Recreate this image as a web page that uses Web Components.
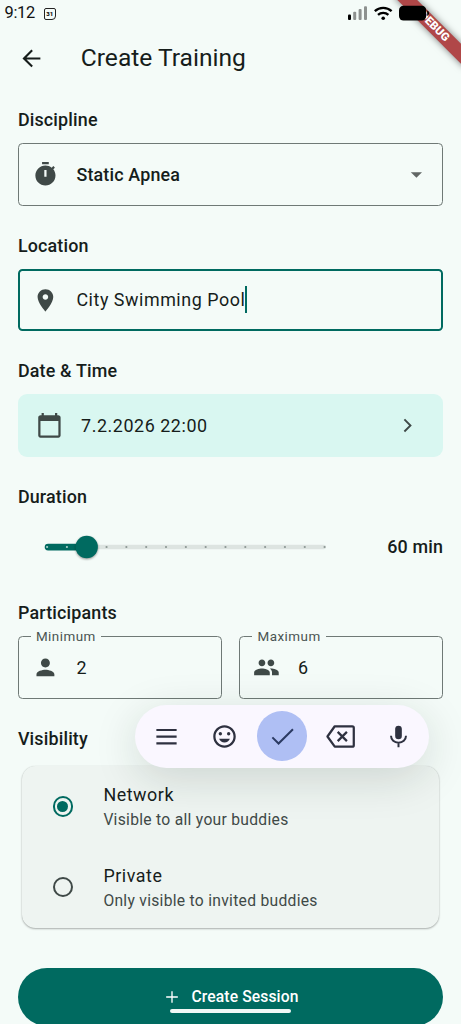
<!DOCTYPE html>
<html lang="en">
<head>
<meta charset="utf-8">
<title>Create Training</title>
<style>
html,body{margin:0;height:100%;overflow:hidden;background:#f4fbf8}
body{font-family:Roboto,"Noto Sans",sans-serif;color:#161d1b}
</style>
</head>
<body>
<training-screen></training-screen>
<script>
const ICONS = {
  back: '<path d="M20 11.100H7.600l5.700-5.700L12 4l-8 8 8 8 1.300-1.400-5.700-5.700H20z"/>',
  timer: '<path fill-rule="evenodd" d="M15 1H9v2h6V1zm-4 13h2V8h-2v6zm8.03-6.61l1.42-1.42c-.43-.51-.9-.99-1.41-1.41l-1.42 1.42C16.07 4.74 14.12 4 12 4c-4.97 0-9 4.03-9 9s4.02 9 9 9 9-4.03 9-9c0-2.12-.74-4.07-1.97-5.61z"/>',
  place: '<path d="M12 2C8.13 2 5 5.13 5 9c0 5.25 7 13 7 13s7-7.75 7-13c0-3.87-3.13-7-7-7zm0 9.5c-1.38 0-2.5-1.12-2.5-2.5s1.12-2.5 2.5-2.5 2.5 1.12 2.5 2.5-1.12 2.5-2.5 2.5z"/>',
  calendar: '<path d="M20 3h-1V1h-2v2H7V1H5v2H4c-1.1 0-2 .9-2 2v16c0 1.1.9 2 2 2h16c1.1 0 2-.9 2-2V5c0-1.1-.9-2-2-2zm0 18H4V8h16v13z"/>',
  chevron: '<path d="M9.900 6L8.700 7.200 13.500 12l-4.800 4.800L9.900 18l6-6z"/>',
  drop: '<path d="M7 10l5 5 5-5z"/>',
  person: '<path d="M12 12c2.21 0 4-1.79 4-4s-1.79-4-4-4-4 1.79-4 4 1.79 4 4 4zm0 2c-2.67 0-8 1.34-8 4v2h16v-2c0-2.66-5.33-4-8-4z"/>',
  group: '<path d="M16 11c1.66 0 2.99-1.34 2.99-3S17.66 5 16 5s-3 1.34-3 3 1.34 3 3 3zm-8 0c1.66 0 2.99-1.34 2.99-3S9.66 5 8 5 5 6.34 5 8s1.34 3 3 3zm0 2c-2.33 0-7 1.17-7 3.5V19h14v-2.5c0-2.33-4.67-3.5-7-3.5zm8 0c-.29 0-.62.02-.97.05 1.16.84 1.97 1.97 1.97 3.45V19h6v-2.5c0-2.33-4.67-3.5-7-3.5z"/>',
  add: '<path d="M19 12.8h-6.2V19h-1.6v-6.2H5v-1.6h6.2V5h1.6v6.200H19z"/>',
  menu: '<path d="M3 5.300h18v1.900H3zM3 11.200h18v1.900H3zM3 17.100h18v1.900H3z"/>',
  smile: '<path d="M11.99 2C6.47 2 2 6.48 2 12s4.47 10 9.99 10C17.52 22 22 17.52 22 12S17.52 2 11.99 2zM12 20c-4.42 0-8-3.58-8-8s3.580-8 8-8 8 3.58 8 8-3.58 8-8 8z"/><circle cx="8.3" cy="9.5" r="1.5"/><circle cx="15.7" cy="9.5" r="1.5"/><path d="M7.200 14h9.600c-.8 2.100-2.600 3.300-4.800 3.300s-4-1.200-4.800-3.300z"/>',
  check: '<path fill="none" stroke="currentColor" stroke-width="1.800" d="M3 12.800l5.500 5.400L21.300 5.600"/>',
  erase: '<path fill="none" stroke="currentColor" stroke-width="2" stroke-linejoin="round" d="M6.900 2.900H22.500c.8 0 1.300.5 1.300 1.300v15.500c0 .8-.5 1.300-1.300 1.300H6.900L.4 12z"/><path fill="none" stroke="currentColor" stroke-width="2" d="M9.500 7.900l8.200 8.200M17.700 7.900l-8.200 8.200"/>',
  mic: '<rect x="8.800" y="1.600" width="6.400" height="13" rx="3.200"/><path fill="none" stroke="currentColor" stroke-width="1.900" d="M4.800 11.300c0 3.900 3.200 6.600 7.200 6.600s7.200-2.700 7.200-6.600M12 17.500v4.800"/>'
};

function define(name, html) {
  customElements.define(name, class extends HTMLElement {
    constructor() {
      super();
      const t = document.createElement('template');
      t.innerHTML = html;
      this.attachShadow({mode: 'open'}).append(t.content.cloneNode(true));
    }
  });
}

customElements.define('md-icon', class extends HTMLElement {
  constructor() { super(); this.attachShadow({mode: 'open'}); }
  connectedCallback() {
    this.shadowRoot.innerHTML = `<style>
      :host{display:block;flex:none;width:var(--icon-size,26.850px);height:var(--icon-size,26.850px);color:#3f4947}
      svg{display:block;width:100%;height:100%;overflow:visible;fill:currentColor}
    </style><svg viewBox="0 0 24 24">${ICONS[this.getAttribute('name')]}</svg>`;
  }
});

define('debug-banner', `<style>
  :host{position:absolute;top:0;right:0;width:75px;height:75px;overflow:hidden}
  div{position:absolute;left:75px;top:0;width:0;height:0;transform:rotate(45deg)}
  span{position:absolute;left:-50px;top:31.300px;width:100px;height:13.400px;background:#b04748;box-shadow:0 0 7px rgba(0,0,0,.5);
    color:#fff;font-size:11.400px;line-height:13.400px;font-weight:900;text-align:center}
</style><div><span>DEBUG</span></div>`);

define('status-bar', `<style>
  :host{display:flex;align-items:center;height:26px;padding:0 32px 0 4.500px;box-sizing:border-box;position:relative;z-index:2;color:#111}
  .time{font-size:16.400px;line-height:26px;letter-spacing:-.3px}
  .cal{margin-left:9px;margin-top:1px;width:11.800px;height:12px;box-sizing:border-box;border:1.400px solid #222;border-radius:2px 2px 4px 2px;
    font-size:6px;line-height:9.500px;font-weight:900;text-align:center}
  svg{display:block;margin-left:auto}
</style>
<span class="time">9:12</span><span class="cal">31</span>
<svg width="81" height="26" viewBox="348 0 81 26">
  <rect x="348" y="14.500" width="3" height="5.500" rx="1"/>
  <g fill="#8d918f"><rect x="353.200" y="11.700" width="3" height="8.300" rx="1"/><rect x="358.600" y="9" width="3" height="11" rx="1"/><rect x="364" y="6.300" width="3" height="13.700" rx="1"/></g>
  <g fill="none" stroke="#000" stroke-width="2.300"><path d="M374.800 11.200a12.200 12.200 0 0 1 16.800 0"/><path d="M378 14.900a7.600 7.600 0 0 1 10.400 0"/></g>
  <circle cx="383.200" cy="18.200" r="1.800"/>
  <rect x="399" y="5.800" width="27.200" height="14.700" rx="4.500"/><path d="M427.200 10.500q1.800.6 1.800 2.700t-1.800 2.700z"/>
</svg>`);

define('app-bar', `<style>
  :host{display:flex;align-items:center;height:63px;padding:.8px 0 0 17.900px;box-sizing:border-box}
  md-icon{color:#161d1b;margin-top:1px}
  h1{margin:0 0 0 36px;font-size:24.600px;line-height:31px;font-weight:400}
</style><md-icon name="back"></md-icon><h1><slot></slot></h1>`);

define('form-section', `<style>
  :host{display:block;margin-bottom:26.900px}
  h2{margin:0 0 9px;font-size:17.900px;line-height:26.900px;font-weight:500;letter-spacing:.17px}
</style><h2><slot name="title"></slot></h2><slot></slot>`);

define('outlined-field', `<style>
  :host{display:flex;flex:1;align-items:center;position:relative;box-sizing:border-box;height:62.700px;padding:0 12.700px;
    border:1px solid #6f7976;border-radius:4.500px;font-size:17.900px;letter-spacing:.54px}
  :host([focused]){border:2px solid #006a60;padding:0 11.700px}
  :host([strong]){font-weight:500;letter-spacing:.17px}
  .value{margin-left:18px;margin-bottom:1px;line-height:27px}
  :host([focused]) .value{border-right:2px solid #006a60}
  ::slotted([slot=label]){position:absolute;left:12px;top:-10px;padding:0 5px;line-height:19px;font-size:13.430px;letter-spacing:.48px;background:#f4fbf8;color:#4a5452}
  ::slotted([slot=end]){margin-left:auto}
</style><slot name="label"></slot><slot name="icon"></slot><span class="value"><slot></slot></span><slot name="end"></slot>`);

define('date-tile', `<style>
  :host{display:flex;align-items:center;height:62.700px;box-sizing:border-box;padding:0 22.700px 0 17.900px;background:#d9f7f1;border-radius:9px;font-size:17.900px;letter-spacing:.56px}
  span{margin-left:18.400px;flex:1}
</style><md-icon name="calendar"></md-icon><span><slot></slot></span><md-icon name="chevron"></md-icon>`);

customElements.define('duration-slider', class extends HTMLElement {
  constructor() {
    super();
    const ticks = Array.from({length: 15}, (_, i) =>
      `<circle cx="${47.1 + i * 19.82}" cy="27" r="1.1" fill="${i < 2 ? '#a9d0ca' : '#8b9693'}"/>`).join('');
    this.attachShadow({mode: 'open'}).innerHTML = `<style>
      :host{display:flex;align-items:center;justify-content:space-between;height:53.700px;font-size:17.900px;font-weight:500;letter-spacing:.17px}
      svg{display:block;margin-left:-18px;overflow:visible}
      span{margin-bottom:1px}
      .knob{filter:drop-shadow(0 1px 1px rgba(0,0,0,.4))}
    </style><svg width="330" height="54">
      <rect x="70" y="24.800" width="256" height="4.500" rx="2.200" fill="#dde4e1"/>
      <rect x="44.700" y="23.700" width="45" height="6.700" rx="3.350" fill="#006a60"/>${ticks}
      <circle class="knob" cx="86.700" cy="27" r="11.200" fill="#006a60"/>
    </svg><span><slot></slot></span>`;
  }
});

define('participant-row', `<style>:host{display:grid;grid-template-columns:1fr 1fr;gap:17.900px}</style><slot></slot>`);

define('option-card', `<style>
  :host{display:block;margin:13.500px 4.500px 0;border-radius:13.400px;background:#eef4f1;box-shadow:0 1px 2px rgba(0,0,0,.3),0 0 1px rgba(0,0,0,.12)}
</style><slot></slot>`);

define('radio-option', `<style>
  :host{display:flex;align-items:center;height:80.700px;padding-left:30.300px}
  i{flex:none;box-sizing:border-box;width:20.400px;height:20.400px;border:2px solid #3f4947;border-radius:50%;display:grid;place-items:center}
  :host([checked]) i{border-color:#006a60}
  :host([checked]) i::after{content:"";width:11px;height:11px;border-radius:50%;background:#006a60}
  div{margin:0 0 1px 30.300px}
  b,small{display:block;font-weight:400}
  b{font-size:17.900px;line-height:27px;letter-spacing:.54px}
  small{font-size:15.660px;line-height:23.400px;letter-spacing:.28px;color:#3f4947}
</style><i></i><div><b><slot></slot></b><small><slot name="detail"></slot></small></div>`);

define('create-button', `<style>
  :host{display:flex;align-items:center;justify-content:center;height:58.500px;border-radius:29px;background:#006a60;color:#fff;font-size:15.660px;font-weight:500;letter-spacing:.11px;--icon-size:20px}
  md-icon{color:#fff;margin-right:9px}
</style><md-icon name="add"></md-icon><slot></slot>`);

define('input-toolbar', `<style>
  :host{position:absolute;left:134.700px;top:704.500px;width:294.200px;height:63.200px;box-sizing:border-box;padding:0 1.600px 0 2.600px;border-radius:32px;background:#faf7ff;
    display:grid;grid-template-columns:repeat(5,1fr);align-items:center;justify-items:center;box-shadow:0 10px 44px rgba(20,40,30,.15)}
  md-icon{color:#2e3140}
  .ok{width:49.600px;height:49.600px;border-radius:50%;background:#afbff4;display:grid;place-items:center}
  .ok md-icon{color:#2b3a62}
</style>
<md-icon name="menu" style="--icon-size:27px"></md-icon><md-icon name="smile" style="--icon-size:27px"></md-icon>
<span class="ok"><md-icon name="check" style="--icon-size:27px"></md-icon></span>
<md-icon name="erase" style="--icon-size:27px"></md-icon><md-icon name="mic" style="--icon-size:25px"></md-icon>`);

define('home-handle', `<style>:host{position:absolute;left:169.700px;top:1008.600px;width:121.500px;height:4.500px;border-radius:3px;background:#f2f8f6}</style>`);

define('training-screen', `<style>
  :host{display:block;position:relative;width:461px;height:1024px;overflow:hidden;background:#f4fbf8}
  main{padding:18.400px 17.900px 0}
  create-button{margin-top:40px}
</style>
<status-bar></status-bar><debug-banner></debug-banner>
<app-bar>Create Training</app-bar>
<main>
  <form-section><span slot="title">Discipline</span>
    <outlined-field strong><md-icon slot="icon" name="timer"></md-icon>Static Apnea<md-icon slot="end" name="drop" style="color:#616664"></md-icon></outlined-field>
  </form-section>
  <form-section><span slot="title">Location</span>
    <outlined-field focused><md-icon slot="icon" name="place"></md-icon>City Swimming Pool</outlined-field>
  </form-section>
  <form-section><span slot="title">Date &amp; Time</span><date-tile>7.2.2026 22:00</date-tile></form-section>
  <form-section><span slot="title">Duration</span><duration-slider>60 min</duration-slider></form-section>
  <form-section><span slot="title">Participants</span>
    <participant-row>
      <outlined-field><span slot="label">Minimum</span><md-icon slot="icon" name="person"></md-icon>2</outlined-field>
      <outlined-field><span slot="label">Maximum</span><md-icon slot="icon" name="group"></md-icon>6</outlined-field>
    </participant-row>
  </form-section>
  <form-section style="margin:0"><span slot="title">Visibility</span>
    <option-card>
      <radio-option checked>Network<span slot="detail">Visible to all your buddies</span></radio-option>
      <radio-option>Private<span slot="detail">Only visible to invited buddies</span></radio-option>
    </option-card>
  </form-section>
  <create-button>Create Session</create-button>
</main>
<input-toolbar></input-toolbar>
<home-handle></home-handle>`);
</script>
</body>
</html>
